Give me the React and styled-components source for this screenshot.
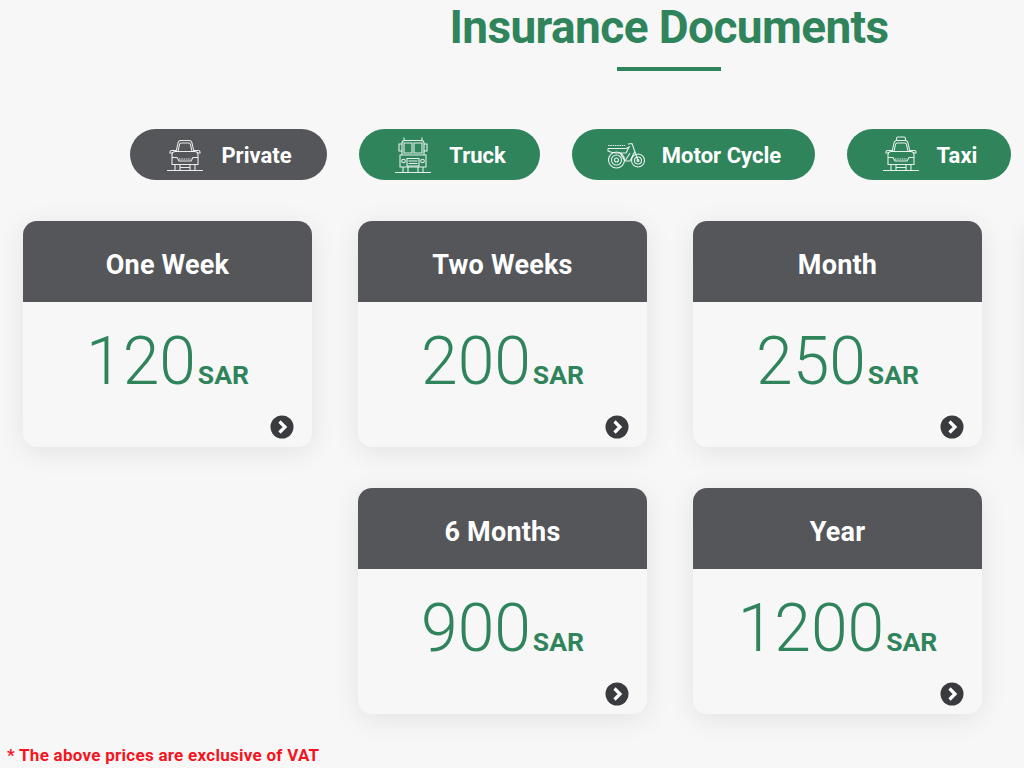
import styled, { createGlobalStyle } from 'styled-components';

const GREEN = '#30845c';
const SLATE = '#54565a';

const GlobalStyle = createGlobalStyle`
  html, body {
    margin: 0;
    padding: 0;
    background: #f7f7f7;
  }
  body {
    font-family: 'Roboto', 'Liberation Sans', sans-serif;
  }
`;

const Page = styled.div`
  width: 1024px;
  height: 768px;
  overflow: hidden;
  display: flex;
  flex-direction: column;
`;

const Heading = styled.h1`
  margin: 0;
  padding: 1px 0 0 314px;
  text-align: center;
  font-size: 46px;
  line-height: 52px;
  font-weight: 700;
  letter-spacing: -0.6px;
  color: ${GREEN};
`;

const Rule = styled.div`
  align-self: flex-start;
  width: 104px;
  height: 4px;
  margin: 14px 0 0 617px;
  background: ${GREEN};
`;

const Tabs = styled.div`
  display: flex;
  gap: 32px;
  margin: 58px 0 0 130px;
`;

const Tab = styled.button`
  display: flex;
  align-items: center;
  justify-content: center;
  gap: 16px;
  width: ${(p) => p.$width}px;
  height: 51px;
  padding: 0;
  flex: none;
  border: 0;
  border-radius: 26px;
  background: ${(p) => (p.$active ? SLATE : GREEN)};
  color: #fff;
  font-family: inherit;
  font-size: 22px;
  font-weight: 700;
`;

const TabLabel = styled.span`
  padding-top: 2px;
`;

const TabIcon = styled.svg`
  width: 40px;
  height: 40px;
  flex: none;
  fill: none;
  stroke: rgba(255, 255, 255, 0.88);
  stroke-width: 1.1;
`;

const Cards = styled.div`
  display: grid;
  grid-template-columns: repeat(4, 289px);
  column-gap: 46px;
  row-gap: 41px;
  margin: 41px 0 0 23px;
`;

const Card = styled.div`
  grid-column: ${(p) => p.$col || 'auto'};
  height: 226px;
  display: flex;
  flex-direction: column;
  border-radius: 14px;
  background: #f7f7f7;
  box-shadow: 0 5px 28px rgba(0, 0, 0, 0.085);
  overflow: hidden;
`;

const CardHead = styled.div`
  height: 81px;
  flex: none;
  padding-top: 7px;
  box-sizing: border-box;
  display: flex;
  align-items: center;
  justify-content: center;
  background: ${SLATE};
  color: #fff;
  font-size: 27px;
  font-weight: 700;
  letter-spacing: 0.2px;
`;

const CardBody = styled.div`
  flex: 1;
  display: flex;
  flex-direction: column;
  padding: 24px 18px 8px;
`;

const Price = styled.div`
  display: flex;
  align-items: baseline;
  justify-content: center;
  color: ${GREEN};
  line-height: 72px;
`;

const Amount = styled.span`
  font-size: 66px;
  font-weight: 300;
`;

const Unit = styled.span`
  font-size: 26.5px;
  font-weight: 700;
  margin-left: 2px;
`;

const Arrow = styled.svg`
  width: 24px;
  height: 24px;
  margin-top: auto;
  align-self: flex-end;
`;

const Note = styled.p`
  margin: 31px 0 0 7px;
  font-size: 17px;
  line-height: 20px;
  font-weight: 700;
  letter-spacing: 0.27px;
  color: #f5141e;
`;

const carPaths = (
  <>
    <path d="M11 17L13 8Q13.5 5.5 16 5.500H24Q26.5 5.5 27 8L29 17" />
    <path d="M13 16.500L14.500 9.500Q14.800 8 16.500 8H23.500Q25.200 8 25.500 9.500L27 16.500" />
    <path d="M11 15.500H6.500Q5 15.500 5 17V18H8M29 15.500H33.500Q35 15.500 35 17V18H32" />
    <path d="M7 20Q7 16.500 10.500 16.500H29.500Q33 16.500 33 20V29.500H7Z" />
    <path d="M7 22.500H12L14 26H26L28 22.500H33" />
    <path d="M14 24H26" strokeDasharray="1.500 .8" />
    <path d="M10 29.500V35M15 29.500V35M25 29.500V35M30 29.500V35M15 32.500H25M2 35.500H38" />
  </>
);

function CarIcon() {
  return <TabIcon viewBox="0 0 40 40">{carPaths}</TabIcon>;
}

function TaxiIcon() {
  return (
    <TabIcon viewBox="0 0 40 40">
      <path d="M15.500 5.500V3.500Q15.500 2 17 2H23Q24.500 2 24.500 3.500V5.500" />
      {carPaths}
    </TabIcon>
  );
}

function TruckIcon() {
  return (
    <TabIcon viewBox="0 0 40 40">
      <path d="M11 5.500V2.500M29 5.500V2.500" />
      <path d="M9 20V8Q9 5.500 12 5.500H28Q31 5.500 31 8V20" />
      <path d="M11 8H19V18H11ZM21 8H29V18H21Z" />
      <path d="M9 9H6V16H9M31 9H34V16H31" />
      <path d="M7 20H33V32H7Z" />
      <path d="M14 23.500H26V31H14ZM15.500 26H24.500M15.500 28.500H24.500" />
      <circle cx="10.500" cy="26" r="1.800" />
      <circle cx="29.500" cy="26" r="1.800" />
      <path d="M10 32V37.500M15 32V37.500M25 32V37.500M30 32V37.500M2 37.500H38" />
    </TabIcon>
  );
}

function BikeIcon() {
  return (
    <TabIcon viewBox="0 0 40 40">
      <circle cx="10.500" cy="25" r="8" />
      <circle cx="10.500" cy="25" r="5" />
      <circle cx="10.500" cy="25" r="2" />
      <circle cx="32" cy="25.500" r="6.500" />
      <circle cx="32" cy="25.500" r="3.500" />
      <circle cx="32" cy="25.500" r="1" />
      <path d="M2 10.500H19" strokeDasharray="1.500 .8" />
      <path d="M2 13.500H20L24 11.500M2 13.500V16Q6 18 10 18H20L23 12" />
      <path d="M22 9L26 8.500L32 25.500M14 18L19 26H24L29 16M19 26L24 18" />
    </TabIcon>
  );
}

function ArrowIcon() {
  return (
    <Arrow viewBox="0 0 24 24">
      <circle cx="12" cy="12" r="11.500" fill="#3a3b3f" />
      <path d="M9.500 6.500L15 12L9.500 17.500" fill="none" stroke="#fff" strokeWidth="3.200" />
    </Arrow>
  );
}

const tabs = [
  { label: 'Private', width: 197, icon: <CarIcon />, active: true },
  { label: 'Truck', width: 181, icon: <TruckIcon /> },
  { label: 'Motor Cycle', width: 243, icon: <BikeIcon /> },
  { label: 'Taxi', width: 164, icon: <TaxiIcon /> },
];

// the last card of the first row runs off the right of the page
const plans = [
  { title: 'One Week', price: '120' },
  { title: 'Two Weeks', price: '200' },
  { title: 'Month', price: '250' },
  { title: '' },
  { title: '6 Months', price: '900', col: 2 },
  { title: 'Year', price: '1200' },
];

export default function App() {
  return (
    <Page>
      <GlobalStyle />
      <Heading>Insurance Documents</Heading>
      <Rule />
      <Tabs>
        {tabs.map((t) => (
          <Tab key={t.label} $active={t.active} $width={t.width}>
            {t.icon}
            <TabLabel>{t.label}</TabLabel>
          </Tab>
        ))}
      </Tabs>
      <Cards>
        {plans.map((p) => (
          <Card key={p.title} $col={p.col}>
            <CardHead>{p.title}</CardHead>
            {p.price && (
              <CardBody>
                <Price>
                  <Amount>{p.price}</Amount>
                  <Unit>SAR</Unit>
                </Price>
                <ArrowIcon />
              </CardBody>
            )}
          </Card>
        ))}
      </Cards>
      <Note>* The above prices are exclusive of VAT</Note>
    </Page>
  );
}
